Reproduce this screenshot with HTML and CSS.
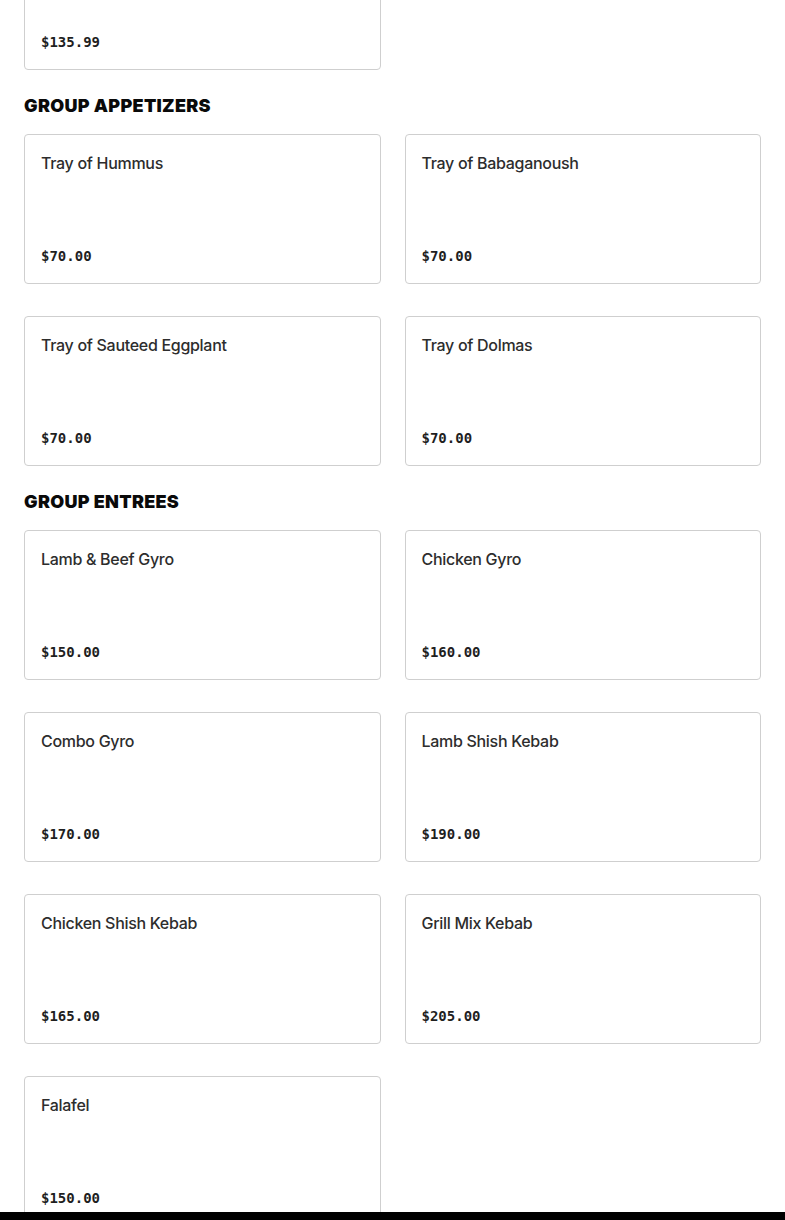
FILE: index.html
```html
<!DOCTYPE html>
<html lang="en">
<head>
<meta charset="utf-8">
<title>Menu</title>
<link rel="stylesheet" href="styles.css">
</head>
<body>
<main class="menu">
  <section class="group group-first">
    <div class="grid">
      <div class="card"><div class="name"></div><div class="price">$135.99</div></div>
    </div>
  </section>
  <section class="group">
    <h2 class="group-title">GROUP APPETIZERS</h2>
    <div class="grid">
      <div class="card"><div class="name">Tray of Hummus</div><div class="price">$70.00</div></div>
      <div class="card"><div class="name">Tray of Babaganoush</div><div class="price">$70.00</div></div>
      <div class="card"><div class="name">Tray of Sauteed Eggplant</div><div class="price">$70.00</div></div>
      <div class="card"><div class="name">Tray of Dolmas</div><div class="price">$70.00</div></div>
    </div>
  </section>
  <section class="group">
    <h2 class="group-title">GROUP ENTREES</h2>
    <div class="grid">
      <div class="card"><div class="name">Lamb &amp; Beef Gyro</div><div class="price">$150.00</div></div>
      <div class="card"><div class="name">Chicken Gyro</div><div class="price">$160.00</div></div>
      <div class="card"><div class="name">Combo Gyro</div><div class="price">$170.00</div></div>
      <div class="card"><div class="name">Lamb Shish Kebab</div><div class="price">$190.00</div></div>
      <div class="card"><div class="name">Chicken Shish Kebab</div><div class="price">$165.00</div></div>
      <div class="card"><div class="name">Grill Mix Kebab</div><div class="price">$205.00</div></div>
      <div class="card"><div class="name">Falafel</div><div class="price">$150.00</div></div>
    </div>
  </section>
</main>
<div class="bottom-bar"></div>
</body>
</html>
```
FILE: styles.css
```css
html, body {
  margin: 0;
  padding: 0;
  background: #ffffff;
}
body {
  font-family: "Inter", "Liberation Sans", sans-serif;
  color: #2b2b2b;
}
.menu {
  padding: 0 24px;
}
.group-first {
  margin-top: -80px;
}
.group-title {
  margin: 24px 0 16px;
  font-family: "Inter", "Liberation Sans", sans-serif;
  font-weight: 900;
  font-size: 18px;
  line-height: 24px;
  letter-spacing: 0.3px;
  color: #0a0a0a;
}
.grid {
  display: grid;
  grid-template-columns: 1fr 1fr;
  column-gap: 24px;
  row-gap: 32px;
}
.card {
  box-sizing: border-box;
  height: 150px;
  border: 1px solid #cfcfcf;
  border-radius: 4px;
  padding: 16px 16px 17px;
  display: flex;
  flex-direction: column;
  justify-content: space-between;
}
.name {
  font-size: 16px;
  font-weight: 500;
  line-height: 24px;
  color: #2d2d2d;
  letter-spacing: -0.3px;
}
.price {
  font-family: "DejaVu Sans Mono", "Liberation Mono", monospace;
  font-weight: bold;
  font-size: 14px;
  line-height: 20px;
  color: #1f1f1f;
}
.bottom-bar {
  position: fixed;
  left: 0;
  right: 0;
  bottom: 0;
  height: 8px;
  background: #000;
}
```
